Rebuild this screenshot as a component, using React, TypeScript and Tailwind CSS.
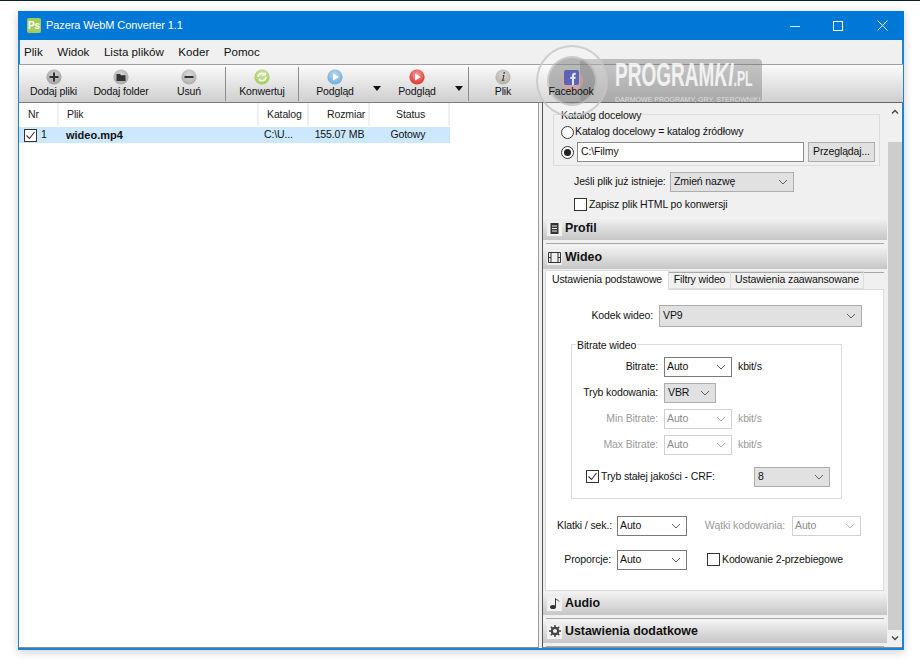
import React from "react";

const FONT = { fontFamily: '"Liberation Sans", Arial, sans-serif' };

function Chevron({ color = "#606060" }: { color?: string }) {
  return (
    <svg width="10" height="6" viewBox="0 0 10 6" className="shrink-0">
      <path d="M1 1l4 4 4-4" fill="none" stroke={color} strokeWidth="1" />
    </svg>
  );
}

type SelVariant = "gray" | "white" | "disabled";
function Select({ w, h = 20, text, variant = "white" }: { w: number; h?: number; text: string; variant?: SelVariant }) {
  const cls =
    variant === "gray"
      ? "bg-[#e1e1e1] border-[#adadad] text-[#111] pl-[3px]"
      : variant === "white"
        ? "bg-white border-[#7a7a7a] text-[#111] pl-[2px]"
        : "bg-white border-[#d0d0d0] text-[#8a8a8a] pl-[2px]";
  return (
    <div className={`flex items-center justify-between border pr-[5px] shrink-0 ${cls}`} style={{ width: w, height: h }}>
      <span>{text}</span>
      <Chevron color={variant === "disabled" ? "#b5b5b5" : "#606060"} />
    </div>
  );
}

function Check({ checked = false }: { checked?: boolean }) {
  return (
    <span className="w-[13px] h-[13px] border border-[#333] bg-white flex items-center justify-center shrink-0">
      {checked && (
        <svg width="11" height="11" viewBox="0 0 11 11">
          <path d="M1.5 5.5l3 3 5-6.5" fill="none" stroke="#333" strokeWidth="1.1" />
        </svg>
      )}
    </span>
  );
}

function Radio({ on = false }: { on?: boolean }) {
  return (
    <span className="w-[13px] h-[13px] rounded-full border border-[#333] bg-white flex items-center justify-center shrink-0">
      {on && <span className="w-[7px] h-[7px] rounded-full bg-[#222]" />}
    </span>
  );
}

function Round({ children, bg }: { children?: React.ReactNode; bg: string }) {
  return (
    <svg width="16" height="16" viewBox="0 0 16 16" className="shrink-0">
      <defs>
        <radialGradient id={bg} cx="50%" cy="35%" r="70%">
          <stop offset="0%" stopColor="#ffffff" stopOpacity="0.55" />
          <stop offset="100%" stopColor="#ffffff" stopOpacity="0" />
        </radialGradient>
      </defs>
      <circle cx="8" cy="8" r="7.6" fill={bg} />
      <circle cx="8" cy="8" r="7.6" fill={`url(#${bg})`} />
      {children}
    </svg>
  );
}

function ToolBtn({ w, label, icon, cls = "" }: { w: number; label: string; icon: React.ReactNode; cls?: string }) {
  return (
    <div className={`flex flex-col items-center pt-[4px] shrink-0 ${cls}`} style={{ width: w }}>
      <div className="h-[16px] flex items-center">{icon}</div>
      <div className="-mt-[1px] text-[#111] leading-[14px] whitespace-nowrap">{label}</div>
    </div>
  );
}

function Sep({ ml = 0 }: { ml?: number }) {
  return <div className="w-px h-[34px] bg-[#8c8c8c] mt-[2px] shrink-0" style={{ marginLeft: ml }} />;
}

function Arrow({ w }: { w: number }) {
  return (
    <div className="flex justify-center pt-[21px] shrink-0" style={{ width: w }}>
      <svg width="8" height="5" viewBox="0 0 8 5">
        <path d="M0 0h8L4 5z" fill="#111" />
      </svg>
    </div>
  );
}

function Header({ label, icon, mt = 0 }: { label: string; icon: React.ReactNode; mt?: number }) {
  return (
    <div style={{ marginTop: mt }}>
      <div className="h-[23px] flex items-center bg-gradient-to-b from-[#f3f3f3] to-[#c6c6c6] pl-[4px]">
        <span className="w-[15px] h-[15px] bg-[#f0f0f0] flex items-center justify-center shrink-0">{icon}</span>
        <span className="ml-[3px] font-bold text-[12.4px] tracking-normal text-[#111] whitespace-nowrap">{label}</span>
      </div>
      <div className="h-px bg-[#a8a8a8] mt-[3px] mx-[3px]" />
    </div>
  );
}

function HeadCell({ w, label, cls = "" }: { w: number; label: string; cls?: string }) {
  return (
    <div className={`h-full border-r-2 border-[#f0f0f0] flex items-center shrink-0 whitespace-nowrap pt-px ${cls}`} style={{ width: w }}>
      {label}
    </div>
  );
}

function BitrateRow({ label, text, sw, variant, unit, disabled, mt }: { label: string; text: string; sw: number; variant: SelVariant; unit?: boolean; disabled?: boolean; mt: number }) {
  const tc = disabled ? "text-[#9a9a9a]" : "text-[#111]";
  return (
    <div className="flex items-center" style={{ marginTop: mt }}>
      <div className={`w-[79px] text-right mr-[6px] whitespace-nowrap ${tc}`}>{label}</div>
      <Select w={sw} text={text} variant={variant} />
      {unit && <span className={`ml-[6px] ${tc}`}>kbit/s</span>}
    </div>
  );
}

export default function App() {
  return (
    <div className="w-[920px] h-[666px] overflow-hidden bg-white relative text-[10.5px] tracking-[-0.12px] text-[#111]" style={FONT}>
      <div className="h-px bg-[#0c2228]" />
      <div className="w-[886px] h-[639px] ml-[18px] mt-[10px] border-x-2 border-b-2 border-[#1a82d8] bg-[#f0f0f0] flex flex-col shadow-[0_2px_9px_rgba(0,0,0,0.2)]">
        {/* Title bar */}
        <div className="h-[29px] -mx-[2px] bg-[#0078d7] flex items-center text-white shrink-0">
          <div className="ml-[9px] w-[14px] h-[15px] rounded-[2px] bg-[#a3cd5a] flex items-center justify-center text-[10px] font-bold leading-none text-white shrink-0">Ps</div>
          <span className="ml-[5px] text-[11px] tracking-[-0.1px]">Pazera WebM Converter 1.1</span>
          <div className="ml-auto flex items-center h-full">
            <div className="w-[10px] h-px bg-white/90 mt-[1px]" />
            <div className="w-[10px] h-[10px] border border-white ml-[33px]" />
            <svg width="11" height="11" viewBox="0 0 11 11" className="ml-[34px] mr-[16px]">
              <path d="M0.5 0.5l10 10M10.5 0.5l-10 10" stroke="#fff" strokeWidth="1" />
            </svg>
          </div>
        </div>
        {/* Menu */}
        <div className="h-[24px] flex items-center pl-[4px] gap-[14.5px] text-[11.6px] tracking-normal text-[#111] shrink-0">
          <span>Plik</span>
          <span>Widok</span>
          <span>Lista plików</span>
          <span>Koder</span>
          <span>Pomoc</span>
        </div>
        {/* Toolbar */}
        <div className="h-[39px] border-t border-[#a0a0a0] border-b border-b-[#7c7c7c] bg-gradient-to-b from-[#fbfbfb] to-[#cfcfcf] flex shrink-0 -mx-[1px] pl-[1px]">
          <ToolBtn w={67} label="Dodaj pliki" icon={<Round bg="#9c9c9c"><path d="M8 3.5v9M3.5 8h9" stroke="#333" strokeWidth="2" /></Round>} />
          <ToolBtn w={68} label="Dodaj folder" icon={<Round bg="#a5a5a5"><path d="M3.5 5h3.5l1 1.2h4.5v5.8h-9z" fill="#333" /></Round>} />
          <ToolBtn w={68} label="Usuń" icon={<Round bg="#ababab"><path d="M3.5 8h9" stroke="#333" strokeWidth="2" /></Round>} />
          <Sep ml={2} />
          <ToolBtn w={72} label="Konwertuj" icon={<Round bg="#9ccb4e"><path d="M4 8a4 4 0 0 1 7-2.4M12 8a4 4 0 0 1-7 2.4" fill="none" stroke="#fff" strokeWidth="1.6" /><path d="M12 3v3.5H8.5z" fill="#fff" /></Round>} />
          <Sep />
          <ToolBtn w={72} label="Podgląd" icon={<Round bg="#6aa9dc"><path d="M6 4.5l6 3.5-6 3.5z" fill="#fff" /></Round>} />
          <Arrow w={12} />
          <ToolBtn w={68} label="Podgląd" icon={<Round bg="#e02a20"><path d="M6 4.5l6 3.5-6 3.5z" fill="#fff" /></Round>} />
          <Arrow w={15} />
          <Sep ml={2} />
          <ToolBtn w={68} label="Plik" icon={<Round bg="#b0aca4"><path d="M8.6 3.2h1.6l-.4 1.6H8.2zM7.8 6h1.7l-1.1 4.8h1.1l-.2.9H6.6l.2-.9h.6l.8-3.9h-.7z" fill="#333" /></Round>} />
          <ToolBtn w={68} cls="relative z-10" label="Facebook" icon={
            <svg width="15" height="15" viewBox="0 0 15 15">
              <rect width="15" height="15" rx="2" fill="#5b64b4" />
              <path d="M8 15V9H6.3V6.8H8V5.3C8 3.6 9 2.8 10.4 2.8h1.3v2.1h-.9c-.6 0-.8.3-.8.8v1.1h1.7L11.4 9H10v6z" fill="#dfe3f5" />
            </svg>
          } />
        </div>
        {/* Body */}
        <div className="flex-1 flex min-h-0 -ml-[1px]">
          {/* File list */}
          <div className="w-[520px] bg-white border-r border-[#9c9c9c] border-b border-b-[#8a8a8a] shrink-0">
            <div className="h-[23px] flex text-[#222]">
              <HeadCell w={40} label="Nr" cls="pl-[9px]" />
              <HeadCell w={200} label="Plik" cls="pl-[8px]" />
              <HeadCell w={50} label="Katalog" cls="pl-[8px]" />
              <HeadCell w={61} label="Rozmiar" cls="pl-[18px]" />
              <HeadCell w={80} label="Status" cls="pl-[26px]" />
            </div>
            <div className="h-[16px] mt-[1px] w-[431px] bg-[#cce8ff] flex items-center">
              <span className="ml-[5px]"><Check checked /></span>
              <span className="ml-[4px] w-[25px]">1</span>
              <span className="font-bold text-[11px] tracking-normal w-[198px]">wideo.mp4</span>
              <span className="w-[46px]">C:\U...</span>
              <span className="w-[59px] text-center">155.07 MB</span>
              <span className="w-[78px] text-center">Gotowy</span>
            </div>
          </div>
          {/* Right panel */}
          <div className="ml-[3px] flex-1 flex min-w-0 border-l border-[#555] border-b border-b-[#8a8a8a] -mt-px border-t border-t-[#666]">
            <div className="w-[344px] shrink-0 relative">
              {/* Katalog group */}
              <div className="mt-[11px] ml-[10px] w-[327px] h-[52px] border border-[#dcdcdc] relative pl-[7px] pt-[9px]">
                <span className="absolute -top-[7px] left-[6px] bg-[#f0f0f0] px-[1px] leading-[14px] whitespace-nowrap">Katalog docelowy</span>
                <div className="flex items-center h-[16px]">
                  <Radio />
                  <span className="ml-[1px] whitespace-nowrap">Katalog docelowy = katalog źródłowy</span>
                </div>
                <div className="flex items-center mt-[2px]">
                  <Radio on />
                  <div className="ml-[3px] w-[227px] h-[20px] bg-white border border-[#8a8a8a] pl-[3px] flex items-center">C:\Filmy</div>
                  <div className="ml-[4px] w-[67px] h-[20px] bg-[#e1e1e1] border border-[#adadad] flex items-center justify-center whitespace-nowrap">Przeglądaj...</div>
                </div>
              </div>
              <div className="flex items-center mt-[6px] ml-[31px]">
                <span className="w-[96px] whitespace-nowrap">Jeśli plik już istnieje:</span>
                <Select w={124} text="Zmień nazwę" variant="gray" />
              </div>
              <div className="flex items-center mt-[5px] ml-[31px]">
                <Check />
                <span className="ml-[2px] whitespace-nowrap">Zapisz plik HTML po konwersji</span>
              </div>
              <div className="mt-[4px]">
                <Header label="Profil" icon={
                  <svg width="9" height="11" viewBox="0 0 9 11"><path d="M0.5 0h8v11h-8z" fill="#333" /><path d="M2 3h5M2 5.5h5M2 8h5" stroke="#eee" strokeWidth="1" /></svg>
                } />
                <Header mt={2} label="Wideo" icon={
                  <svg width="13" height="11" viewBox="0 0 13 11"><path d="M0.5 0.5h12v10h-12zM3 0.5v10M10 0.5v10M0.5 5.5h2.5M10 5.5h2.5" fill="none" stroke="#333" strokeWidth="1" /></svg>
                } />
              </div>
              {/* Tabs */}
              <div className="-mt-[4px] relative">
                <div className="flex h-[20px] pl-[2px] items-end whitespace-nowrap">
                  <div className="w-[124px] h-[20px] bg-white border border-b-0 border-[#dcdcdc] flex items-center justify-center relative z-10 translate-y-px">Ustawienia podstawowe</div>
                  <div className="w-[62px] h-[18px] border-y border-r border-[#dcdcdc] flex items-center justify-center">Filtry wideo</div>
                  <div className="w-[133px] h-[18px] border-y border-r border-[#dcdcdc] flex items-center justify-center">Ustawienia zaawansowane</div>
                </div>
                <div className="ml-[2px] w-[339px] h-[302px] bg-white border border-[#dcdcdc] pt-[15px]">
                  <div className="flex items-center">
                    <div className="w-[107px] text-right mr-[6px] whitespace-nowrap">Kodek wideo:</div>
                    <Select w={203} h={22} text="VP9" variant="gray" />
                  </div>
                  <div className="ml-[25px] mt-[17px] w-[271px] h-[155px] border border-[#dcdcdc] relative pl-[7px] pt-[12px]">
                    <span className="absolute -top-[7px] left-[4px] bg-white px-[1px] leading-[14px] whitespace-nowrap">Bitrate wideo</span>
                    <BitrateRow mt={0} label="Bitrate:" text="Auto" sw={68} variant="white" unit />
                    <BitrateRow mt={6} label="Tryb kodowania:" text="VBR" sw={52} variant="gray" />
                    <BitrateRow mt={6} label="Min Bitrate:" text="Auto" sw={68} variant="disabled" unit disabled />
                    <BitrateRow mt={6} label="Max Bitrate:" text="Auto" sw={68} variant="disabled" unit disabled />
                    <div className="flex items-center mt-[12px] ml-[7px]">
                      <Check checked />
                      <span className="ml-[2px] w-[153px] whitespace-nowrap">Tryb stałej jakości - CRF:</span>
                      <Select w={76} text="8" variant="gray" />
                    </div>
                  </div>
                  <div className="flex items-center mt-[17px]">
                    <div className="w-[66px] text-right mr-[5px] whitespace-nowrap">Klatki / sek.:</div>
                    <Select w={70} text="Auto" />
                    <div className="w-[98px] text-right mr-[7px] text-[#9a9a9a] whitespace-nowrap">Wątki kodowania:</div>
                    <Select w={69} text="Auto" variant="disabled" />
                  </div>
                  <div className="flex items-center mt-[14px]">
                    <div className="w-[65px] text-right mr-[6px] whitespace-nowrap">Proporcje:</div>
                    <Select w={70} text="Auto" />
                    <span className="ml-[20px]"><Check /></span>
                    <span className="ml-[2px] whitespace-nowrap">Kodowanie 2-przebiegowe</span>
                  </div>
                </div>
              </div>
              <div className="mt-[1px]">
                <Header label="Audio" icon={
                  <svg width="12" height="12" viewBox="0 0 12 12"><ellipse cx="4" cy="10" rx="3" ry="2" fill="#333" /><path d="M6.5 10V1.5c1 1.5 3 1.5 3.5 3" fill="none" stroke="#333" strokeWidth="1" /></svg>
                } />
                <Header mt={1} label="Ustawienia dodatkowe" icon={
                  <svg width="12" height="12" viewBox="0 0 12 12"><circle cx="6" cy="6" r="3.2" fill="none" stroke="#444" strokeWidth="2.2" /><path d="M6 0v2.5M6 9.5V12M0 6h2.5M9.5 6H12M1.8 1.8l1.8 1.8M8.4 8.4l1.8 1.8M10.2 1.8L8.4 3.6M3.6 8.4l-1.8 1.8" stroke="#444" strokeWidth="1.5" /></svg>
                } />
              </div>
            </div>
            {/* Scrollbar */}
            <div className="w-[14px] flex flex-col items-center bg-[#f0f0f0] ml-auto">
              <div className="h-[39px] w-full flex justify-center pt-[6px]">
                <svg width="8" height="5" viewBox="0 0 8 5"><path d="M1 4.5l3-3 3 3" fill="none" stroke="#444" strokeWidth="1.3" /></svg>
              </div>
              <div className="flex-1 w-full bg-[#cdcdcd]" />
              <div className="h-[17px] w-full flex justify-center pt-[6px]">
                <svg width="8" height="5" viewBox="0 0 8 5"><path d="M1 0.5l3 3 3-3" fill="none" stroke="#444" strokeWidth="1.3" /></svg>
              </div>
            </div>
          </div>
        </div>
      </div>
      {/* Watermark overlay */}
      <div className="absolute left-[580px] top-[59px] w-[182px] h-[43px] rounded-[4px] bg-[#707070]/40 pointer-events-none" />
      <div className="absolute left-[615px] top-[58px] pointer-events-none flex flex-col items-start">
        <span className="text-white/80 font-bold text-[34px] tracking-normal leading-[32px] origin-left scale-x-[0.56] whitespace-nowrap" style={{ fontFamily: '"Liberation Sans", sans-serif' }}>
          PROGRAM<i>KI</i><span className="text-[22px]">.PL</span>
        </span>
        <span className="text-white/60 text-[7px] tracking-normal leading-[9px] whitespace-nowrap">DARMOWE PROGRAMY, GRY, STEROWNIKI</span>
      </div>
      <div className="absolute left-[536px] top-[45px] w-[72px] h-[72px] rounded-full border-2 border-[#c4c4c4]/80 bg-white/20 pointer-events-none flex items-center justify-center">
        <div className="w-[50px] h-[50px] rounded-full bg-[#6a6a6a]/45 border-2 border-white/30 flex items-center justify-center">
          <div className="w-[22px] h-[22px] rounded-full bg-[#e8a0a0]/50" />
        </div>
      </div>
    </div>
  );
}
